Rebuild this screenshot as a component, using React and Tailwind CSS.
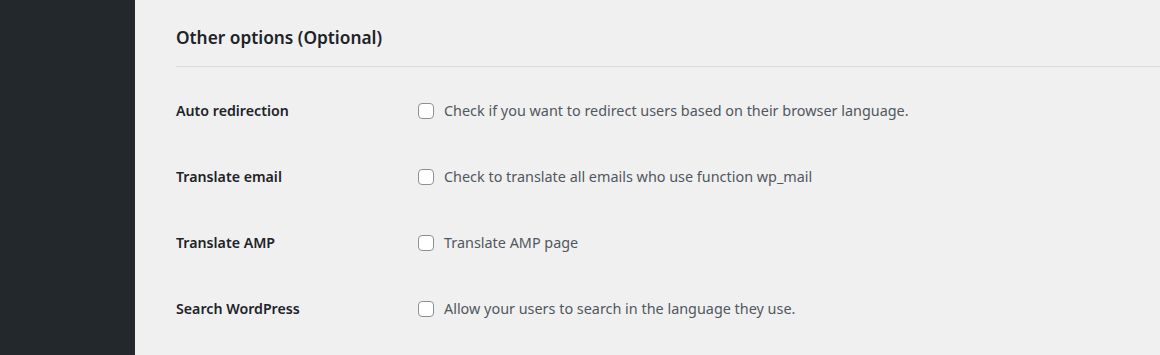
const rows = [
    { label: "Auto redirection", desc: "Check if you want to redirect users based on their browser language." },
    { label: "Translate email", desc: "Check to translate all emails who use function wp_mail" },
    { label: "Translate AMP", desc: "Translate AMP page" },
    { label: "Search WordPress", desc: "Allow your users to search in the language they use." },
];

export default function App() {
    return (
        <div className="flex h-[355px] w-[1160px] overflow-hidden bg-[#f0f0f1] font-['Noto_Sans',sans-serif]">
            <div className="w-[135px] shrink-0 bg-[#23282d]" />
            <main className="flex-1 pl-[41px]">
                <div className="flex h-[67px] items-center border-b border-[#dcdcde] pt-[10px]">
                    <h2 className="text-[17.3px] font-semibold text-[#1d2327]">Other options (Optional)</h2>
                </div>
                <div className="mt-[11px] flex flex-col">
                    {rows.map((row) => (
                        <div key={row.label} className="flex h-[66px] items-center">
                            <div className="w-[242px] shrink-0 text-[14.2px] font-semibold text-[#1d2327]">{row.label}</div>
                            <label className="flex items-center gap-[10px] text-[14.4px] text-[#50575e]">
                                <span className="h-4 w-4 rounded-[4px] border border-[#8c8f94] bg-white" />
                                {row.desc}
                            </label>
                        </div>
                    ))}
                </div>
            </main>
        </div>
    );
}
